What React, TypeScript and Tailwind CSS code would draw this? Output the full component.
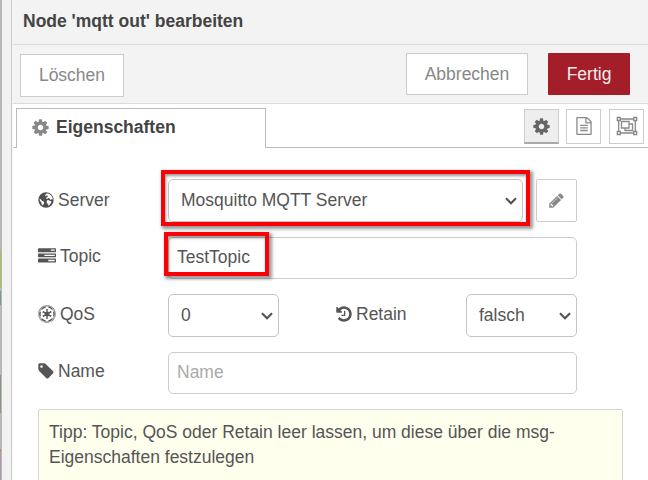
import type { ReactNode } from "react";
import { FaEmpire } from "react-icons/fa";

const COG =
  "M1152 896q0-106-75-181t-181-75-181 75-75 181 75 181 181 75 181-75 75-181zm512-109v222q0 12-8 23t-20 13l-185 28q-19 54-39 91 35 50 107 138 10 12 10 25t-9 23q-27 37-99 108t-94 71q-12 0-26-9l-138-108q-44 23-91 38-16 136-29 186-7 28-36 28h-222q-14 0-24.500-8.500t-11.500-21.500l-28-184q-49-16-90-37l-141 107q-10 9-25 9-14 0-25-11-126-114-165-168-7-10-7-23 0-12 8-23 15-21 51-66.500t54-70.500q-27-50-41-99l-183-27q-13-2-21-12.500t-8-23.500v-222q0-12 8-23t19-13l186-28q14-46 39-92-40-57-107-138-10-12-10-24 0-10 9-23 26-36 98.500-107.500t94.500-71.500q13 0 26 10l138 107q44-23 91-38 16-136 29-186 7-28 36-28h222q14 0 24.500 8.500t11.500 21.500l28 184q49 16 90 37l142-107q9-9 24-9 13 0 25 10 129 119 165 170 7 8 7 22 0 12-8 23-15 21-51 66.500t-54 70.500q26 50 41 98l183 28q13 2 21 12.500t8 23.500z";
const TAG =
  "M576 448q0-53-37.500-90.500t-90.500-37.500-90.500 37.500-37.500 90.500 37.500 90.500 90.500 37.500 90.500-37.500 37.500-90.500zm1067 576q0 53-37 90l-491 492q-39 37-91 37-53 0-90-37l-715-716q-38-37-64.500-101t-26.500-117v-416q0-52 38-90t90-38h416q53 0 117 26.500t102 64.500l715 714q37 39 37 91z";
const HISTORY =
  "M1664 896q0 156-61 298t-164 245-245 164-298 61q-172 0-327-72.500t-264-204.500q-7-10-6.500-22.500t8.500-20.500l137-138q10-9 25-9 16 2 23 12 73 95 179 147t225 52q104 0 198.500-40.500t163.500-109.500 109.500-163.500 40.500-198.500-40.500-198.500-109.500-163.500-163.500-109.500-198.500-40.500q-98 0-188 35.500t-160 101.500l137 138q31 30 14 69-17 40-59 40h-448q-26 0-45-19t-19-45v-448q0-42 40-59 39-17 69 14l130 129q107-101 244.500-156.500t284.500-55.500q156 0 298 61t245 164 164 245 61 298zm-640-288v448q0 14-9 23t-23 9h-320q-14 0-23-9t-9-23v-64q0-14 9-23t23-9h224v-352q0-14 9-23t23-9h64q14 0 23 9t9 23z";
const PENCIL =
  "M491 1536l91-91-235-235-91 91v107h128v128h107zm523-928q0-22-22-22-10 0-17 7l-542 542q-7 7-7 17 0 22 22 22 10 0 17-7l542-542q7-7 7-17zm-54-192l416 416-832 832h-416v-416zm683 96q0 53-37 90l-166 166-416-416 166-165q36-38 90-38 53 0 91 38l235 234q37 39 37 91z";
const FILE =
  "M1596 380q28 28 48 76t20 88v1152q0 40-28 68t-68 28h-1344q-40 0-68-28t-28-68v-1600q0-40 28-68t68-28h896q40 0 88 20t76 48zm-444-244v376h376q-10-29-22-41l-313-313q-12-12-41-22zm384 1528v-1024h-416q-40 0-68-28t-28-68v-416h-768v1536h1280zm-1024-864q0-14 9-23t23-9h704q14 0 23 9t9 23v64q0 14-9 23t-23 9h-704q-14 0-23-9t-9-23v-64zm736 224q14 0 23 9t9 23v64q0 14-9 23t-23 9h-704q-14 0-23-9t-9-23v-64q0-14 9-23t23-9h704zm0 256q14 0 23 9t9 23v64q0 14-9 23t-23 9h-704q-14 0-23-9t-9-23v-64q0-14 9-23t23-9h704z";
const TASKS =
  "M1024 1408h640v-128h-640v128zm-384-512h1024v-128h-1024v128zm640-512h384v-128h-384v128zm512 832v256q0 26-19 45t-45 19h-1664q-26 0-45-19t-19-45v-256q0-26 19-45t45-19h1664q26 0 45 19t19 45zm0-512v256q0 26-19 45t-45 19h-1664q-26 0-45-19t-19-45v-256q0-26 19-45t45-19h1664q26 0 45 19t19 45zm0-512v256q0 26-19 45t-45 19h-1664q-26 0-45-19t-19-45v-256q0-26 19-45t45-19h1664q26 0 45 19t19 45z";

function Glyph({ d, className }: { d: string; className: string }) {
  return (
    <svg viewBox="0 0 1792 1792" fill="currentColor" className={`shrink-0 ${className}`}>
      <path d={d} />
    </svg>
  );
}

function Globe() {
  return (
    <svg viewBox="0 0 16 16" className="-mt-px mr-1 size-4 shrink-0">
      <circle cx="8" cy="8" r="7.7" fill="#505050" />
      <path
        fill="#fff"
        d="M8.600 1.400 11 1.700l2.200 1.700 1.300 2.300.3 2-.9-.6-.9.700-1-.3-.5-1.200-1.400-.2-.8.8-1.200-.3.200-1.200 1.300-.4.300-1.100-1.200-.6-.7.900-.9-.5.500-1.100zM8.800 8.400l1.700-.3 1.400.9 1.500.3-.3 1.500-1.500 1.900-1 1.200-.5-1.700-1.300-1.200zM1.500 6.800l1.200.4 1.200 1.500 1.700.8.7 1.200-.8 1.400-.6 1.400-1.300-1.200-.2-1.700-1.300-1.500z"
      />
    </svg>
  );
}

function ObjectGroup() {
  return (
    <svg viewBox="0 0 22 20" className="h-5 w-[22px] shrink-0" fill="none" stroke="#888" strokeWidth="1.300">
      <path d="M4 3h14M4 17h14M2.700 4v12M19.300 4v12" />
      <path d="M1.300 1.500h3v3h-3zM17.700 1.500h3v3h-3zM1.300 15.500h3v3h-3zM17.700 15.500h3v3h-3z" />
      <path d="M5.500 5.500h7.500v6.500H5.500z" />
      <path d="M13 8h3.500v6.500H9V12" />
    </svg>
  );
}

function Chevron() {
  return (
    <svg viewBox="0 0 12 8" className="h-2 w-3 shrink-0" fill="none" stroke="#555" strokeWidth="2.2">
      <path d="M1 1.300 6 6.300l5-5" />
    </svg>
  );
}

function Label({ icon, text, className = "" }: { icon: ReactNode; text: string; className?: string }) {
  return (
    <div className={`flex h-[42px] w-[130px] shrink-0 items-center ${className}`}>
      {icon}
      <span>{text}</span>
    </div>
  );
}

function Select({ value, className }: { value: string; className: string }) {
  return (
    <div className={`flex h-[43px] items-center justify-between rounded-[5px] border border-[#c4c4c4] bg-white pr-[5px] pl-[12px] ${className}`}>
      <span>{value}</span>
      <Chevron />
    </div>
  );
}

export default function App() {
  return (
    <div className="relative flex h-[480px] w-[648px] overflow-hidden bg-white font-['Liberation_Sans',Arial,sans-serif] text-[17.5px] leading-[25px] text-[#555]">
      <div className="flex w-[2px] shrink-0 flex-col bg-[#b8b6b8]">
        <div className="mt-[250px] h-[38px] w-px bg-[#a4c35c]" />
        <div className="mt-[3px] h-[14px] w-px bg-[#759b8d]" />
        <div className="mt-[70px] h-[38px] w-px bg-[#87967f]" />
        <div className="mt-[36px] h-[2px] w-px bg-[#d88244]" />
        <div className="h-[29px] w-px bg-[#aa9bad]" />
      </div>
      <div className="w-[10px] shrink-0 border-r border-[#c8c8c8] bg-[#f2f2f2]" />
      <div className="w-px shrink-0 bg-[#f8f8f8]" />

      <div className="flex w-[635px] shrink-0 flex-col">
        <header className="flex h-[45px] shrink-0 items-center border-b border-[#ddd] bg-[#f3f3f3] pb-[2px] pl-[10px] font-bold text-[#444]">
          Node 'mqtt out' bearbeiten
        </header>

        <div className="flex h-[59px] shrink-0 items-start border-b border-[#ddd] bg-[#f3f3f3] pt-2 pr-[18px] pl-[7px] text-[#888]">
          <button className="mt-px h-[43px] w-[104px] border border-[#ccc] bg-white pb-px">Löschen</button>
          <button className="ml-auto h-[42px] w-[122px] border border-[#ccc] bg-white">Abbrechen</button>
          <button className="ml-5 h-[42px] w-[82px] rounded-[1px] bg-[#a41e2a] text-[#eee]">Fertig</button>
        </div>

        <div className="flex h-11 shrink-0 items-end">
          <div className="h-full w-[3px] border-b border-[#bbb]" />
          <div className="flex h-10 w-[250px] items-center border border-b-0 border-[#bbb] pb-[2px] pl-[14px] font-bold text-[#444]">
            <Glyph d={COG} className="mr-[6px] size-[19px] text-[#888]" />
            Eigenschaften
          </div>
          <div className="flex h-full flex-1 justify-end gap-[7px] border-b border-[#bbb] pt-[5px] pr-1">
            <div className="flex size-[35px] items-center justify-center border border-b-2 border-[#ccc] border-b-[#aaa] bg-[#eee] text-[#666]">
              <Glyph d={COG} className="size-[19px]" />
            </div>
            <div className="flex size-[35px] items-center justify-center border border-[#ccc] pb-px pl-px text-[#888]">
              <Glyph d={FILE} className="size-[18px]" />
            </div>
            <div className="ml-px flex size-[35px] items-center justify-center border border-[#ccc] pb-px">
              <ObjectGroup />
            </div>
          </div>
        </div>

        <main className="flex flex-1 flex-col pt-[31px] pl-[25px]">
          <div className="flex h-[58px] shrink-0">
            <Label icon={<Globe />} text="Server" />
            <Select value="Mosquitto MQTT Server" className="w-[355px]" />
            <button className="ml-[13px] flex h-[43px] w-[41px] items-center justify-center rounded-[2px] border border-[#ccc] text-[#888]">
              <Glyph d={PENCIL} className="size-[17px]" />
            </button>
          </div>
          <div className="flex h-[57px] shrink-0">
            <Label className="pb-[3px]" icon={<Glyph d={TASKS} className="-mt-[2px] mr-1 size-[18px]" />} text="Topic" />
            <div className="flex h-[42px] w-[409px] items-center rounded-[5px] border border-[#ccc] pb-[2px] pl-2">TestTopic</div>
          </div>
          <div className="flex h-[58px] shrink-0">
            <Label className="pb-[2px]" icon={<FaEmpire className="mr-1 size-[18px]" />} text="QoS" />
            <Select value="0" className="w-[111px]" />
            <div className="ml-[56px]">
              <Label className="pb-[2px]" icon={<Glyph d={HISTORY} className="mr-[3px] size-[18px]" />} text="Retain" />
            </div>
            <Select value="falsch" className="ml-[1px] w-[111px]" />
          </div>
          <div className="flex h-[57px] shrink-0">
            <Label className="pb-[4px]" icon={<Glyph d={TAG} className="-ml-px mr-[3px] size-[18px]" />} text="Name" />
            <div className="flex h-[42px] w-[409px] items-center rounded-[5px] border border-[#ccc] pb-[2px] pl-2 text-[#aaa]">Name</div>
          </div>
          <div className="h-[90px] w-[585px] shrink-0 rounded-t-[2px] border border-[#d6d6d0] bg-[#ffffee] pt-[10px] pl-[10px]">
            Tipp: Topic, QoS oder Retain leer lassen, um diese über die msg-
            <br />
            Eigenschaften festzulegen
          </div>
        </main>
      </div>

      {/* Highlight frames over the server and topic fields */}
      <div className="absolute top-[170px] left-[161px] h-[56px] w-[369px] border-4 border-[#fb0007] shadow-[2px_2px_3px_1px_rgba(0,0,0,0.4),inset_1px_2px_3px_rgba(0,0,0,0.4)]" />
      <div className="absolute top-[232px] left-[164px] h-[44px] w-[105px] border-4 border-[#fb0007] shadow-[2px_2px_3px_1px_rgba(0,0,0,0.4),inset_1px_2px_3px_rgba(0,0,0,0.4)]" />
    </div>
  );
}
